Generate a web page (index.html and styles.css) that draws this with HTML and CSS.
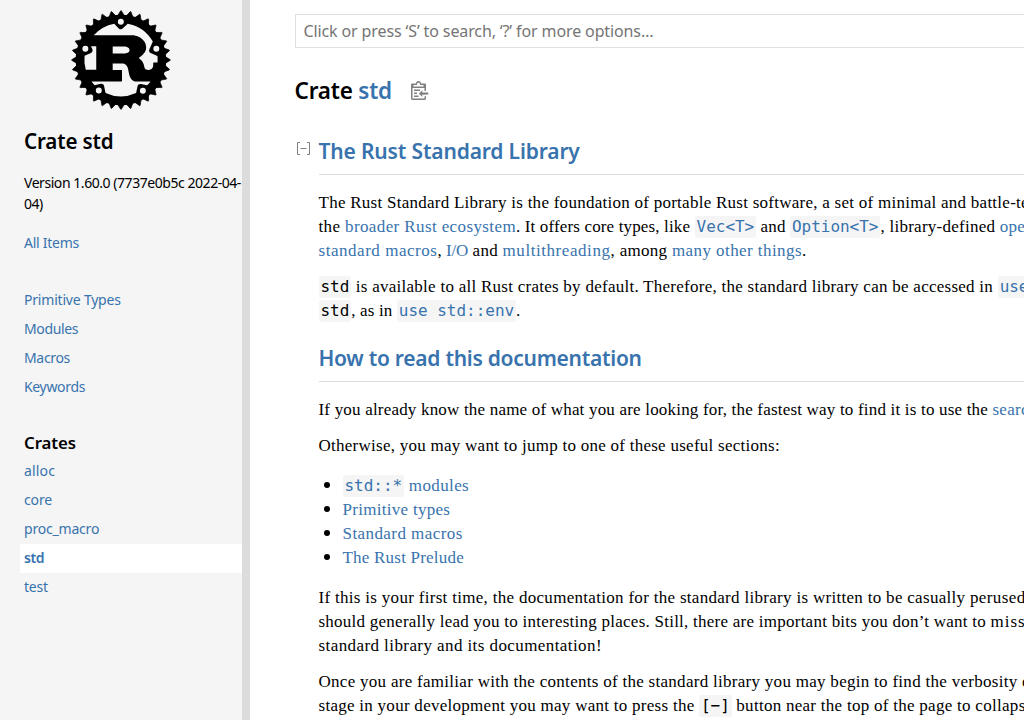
FILE: index.html
```html
<!DOCTYPE html>
<html lang="en">
<head>
<meta charset="utf-8">
<title>std - Rust</title>
<link rel="stylesheet" href="styles.css">
</head>
<body>
<nav class="sidebar">
<svg class="logo" width="100" height="100" viewBox="-52.25 -52.25 104.5 104.5">
<defs><g id="t1"><path d="M-3.600-46.2-.3-51.500H.3L3.600-46.2z" stroke="#000" stroke-width=".7" stroke-linejoin="round"/></g>
<g id="t4"><use href="#t1"/><use href="#t1" transform="rotate(11.25)"/><use href="#t1" transform="rotate(22.5)"/><use href="#t1" transform="rotate(33.75)"/></g>
<g id="t16"><use href="#t4"/><use href="#t4" transform="rotate(45)"/><use href="#t4" transform="rotate(90)"/><use href="#t4" transform="rotate(135)"/></g></defs>
<use href="#t16"/><use href="#t16" transform="rotate(180)"/>
<path transform="translate(-71.05 -70.95)" fill-rule="evenodd" d="m71.05 23.68c-26.06 0-47.27 21.22-47.27 47.27s21.22 47.27 47.27 47.27 47.27-21.22 47.27-47.27-21.22-47.27-47.27-47.27zm-.07 4.2a3.1 3.11 0 0 1 3.02 3.11 3.11 3.11 0 0 1-6.22 0 3.11 3.11 0 0 1 3.2-3.11zm7.12 5.12a38.27 38.27 0 0 1 26.2 18.66l-3.67 8.28c-.63 1.43.02 3.11 1.44 3.75l7.06 3.13a38.27 38.27 0 0 1 .08 6.64h-3.93c-.39 0-.55.26-.55.64v1.8c0 4.24-2.39 5.17-4.49 5.4-2 .23-4.21-.84-4.49-2.06-1.18-6.63-3.14-8.04-6.24-10.49 3.85-2.44 7.85-6.05 7.85-10.87 0-5.21-3.57-8.49-6-10.1-3.42-2.25-7.2-2.7-8.22-2.7h-40.6a38.27 38.27 0 0 1 21.41-12.08l4.79 5.02c1.08 1.13 2.87 1.18 4 .09zm-44.2 23.02a3.11 3.11 0 0 1 3.02 3.11 3.11 3.11 0 0 1-6.22 0 3.11 3.11 0 0 1 3.2-3.11zm74.15.14a3.11 3.11 0 0 1 3.02 3.11 3.11 3.11 0 0 1-6.22 0 3.11 3.11 0 0 1 3.2-3.11zm-68.29.5h5.42v24.44h-10.94a38.27 38.27 0 0 1-1.24-14.61l6.7-2.98c1.43-.64 2.08-2.31 1.44-3.74zm22.62.26h12.91c.67 0 4.71.77 4.71 3.8 0 2.51-3.1 3.41-5.65 3.41h-11.98zm0 17.56h9.89c.9 0 4.83.26 6.08 5.28.39 1.54 1.26 6.56 1.85 8.17.59 1.8 2.98 5.4 5.53 5.4h16.14a38.27 38.27 0 0 1-3.54 4.1l-6.57-1.41c-1.53-.33-3.04.65-3.37 2.18l-1.56 7.28a38.27 38.27 0 0 1-31.91-.15l-1.56-7.28c-.33-1.53-1.83-2.51-3.36-2.18l-6.43 1.38a38.27 38.27 0 0 1-3.32-3.92h31.27c.35 0 .59-.06.59-.39v-11.06c0-.32-.24-.39-.59-.39h-9.15zm-14.43 25.33a3.11 3.11 0 0 1 3.02 3.11 3.11 3.11 0 0 1-6.22 0 3.11 3.11 0 0 1 3.2-3.11zm46.05.14a3.11 3.11 0 0 1 3.02 3.11 3.11 3.11 0 0 1-6.22 0 3.11 3.11 0 0 1 3.2-3.11z"/>
</svg>
<h2 class="crate-name">Crate std</h2>
<p class="version">Version 1.60.0 (7737e0b5c 2022-04-<br>04)</p>
<a class="item all">All Items</a>
<div class="group">
<a class="item snug2">Primitive Types</a>
<a class="item snug4">Modules</a>
<a class="item snug3">Macros</a>
<a class="item snug3">Keywords</a>
</div>
<h3 class="crates">Crates</h3>
<a class="item open">alloc</a>
<a class="item snug1">core</a>
<a class="item snug2">proc_macro</a>
<a class="item current">std</a>
<a class="item snug2">test</a>
</nav>
<div class="gutter"></div>
<main>
<input class="search" placeholder="Click or press ‘S’ to search, ‘?’ for more options…">
<h1>Crate <a>std</a><svg class="copy" width="18" height="19" viewBox="0 0 24 25"><path d="M18 20h2v3c0 1-1 2-2 2H2c-.998 0-2-1-2-2V5c0-.911.755-1.667 1.667-1.667h5A3.323 3.323 0 0110 0a3.323 3.323 0 013.333 3.333h5C19.245 3.333 20 4.09 20 5v8.333h-2V9H2v14h16v-3zM3 7h14c0-.911-.793-1.667-1.75-1.667H13.5c-.957 0-1.75-.755-1.75-1.666C11.75 2.755 10.957 2 10 2s-1.75.755-1.75 1.667c0 .911-.793 1.666-1.75 1.666H4.75C3.793 5.333 3 6.09 3 7z"/><path d="M4 19h6v2H4zM12 11H4v2h8zM4 17h4v-2H4zM15 15v-3l-4.5 4.5L15 21v-3l8.027-.032L23 15z"/></svg></h1>
<div class="doc">
<svg class="toggle" width="17" height="17" viewBox="0 0 17 17"><path d="M5 2.5H2.5v12H5M12 2.5h2.5v12H12M5.500 8.500h6"/></svg>
<article>
<h2 class="title">The Rust Standard Library</h2>
<p><span class="w26">The Rust Standard Library is the foundation of portable Rust software, a set of minimal and </span><span class="w26">battle-tested shared</span><br><span class="w37">the </span><a class="w39">broader Rust ecosystem</a><span class="w14">. It offers core types, like </span><a><code>Vec&lt;T&gt;</code></a><span class="w14"> and </span><a><code>Option&lt;T&gt;</code></a><span class="w26">, library-defined </span><a class="w26">operations on</a><br><a class="w54">standard macros</a>, <a class="tight">I/O</a><span class="w29"> and </span><a class="w56">multithreading</a><span class="w29">, among </span><a class="w43">many other things</a>.</p>
<p><code>std</code><span class="w26"> is available to all Rust crates by default. Therefore, the standard library can be accessed in </span><a><code>use</code></a><br><code>std</code><span class="w14">, as in </span><a><code>use std::env</code></a>.</p>
<h2 class="title">How to read this documentation</h2>
<p><span class="w19">If you already know the name of what you are looking for, the fastest way to find it is to use the </span><a class="w26">search bar</a></p>
<p><span class="w26">Otherwise, you may want to jump to one of these useful sections:</span></p>
<ul>
<li><a class="w39"><code>std::*</code> modules</a></li>
<li><a class="w29">Primitive types</a></li>
<li><a class="w43">Standard macros</a></li>
<li><a class="w22">The Rust Prelude</a></li>
</ul>
<p><span class="w30">If this is your first time, the documentation for the standard library is written to be casually </span><span class="w39">perused.</span><br><span class="w25">should generally lead you to interesting places. Still, there are important bits you don’t want to </span><span class="w100">miss,</span><br><span class="w41">standard library and its documentation!</span></p>
<p><span class="w28">Once you are familiar with the contents of the standard library you may begin to find the verbosity </span><span class="w26">of</span><br><span class="w27">stage in your development you may want to press the </span><code>[−]</code><span class="w27"> button near the top of the page to </span><span class="w30">collapse</span></p>
</article>
</div>
</main>
</body>
</html>
```
FILE: styles.css
```css
* { box-sizing: border-box; }
body { margin: 0; height: 720px; overflow: hidden; display: flex; background: #fff; color: #000; font: 17px/24px "Liberation Serif", serif; }
h1, h2, h3, p, ul { margin: 0; }
h1, h2, h3, .sidebar, .search { font-family: "Noto Sans", sans-serif; font-weight: 600; }
a { color: #3873ad; }

.sidebar { flex: none; width: 242px; height: 720px; padding: 10px 0 0 20px; background: #f5f5f5; display: flex; flex-direction: column; }
.gutter { flex: none; width: 8px; background: #dcdcdc; }
.logo { flex: none; margin-left: 51px; }
.crate-name { padding-left: 4px; margin-top: 15px; font-size: 20.6px; line-height: 32px; letter-spacing: -.15px; }
.version { padding-left: 4px; margin-top: 15px; font-size: 14px; font-weight: 400; line-height: 21px; letter-spacing: -.45px; white-space: nowrap; }
.item { display: block; padding-left: 4px; font-size: 14px; font-weight: 400; line-height: 27px; height: 29px; }
.all { margin-top: 15px; letter-spacing: -.26px; }
.group { margin-top: 28px; }
.crates { padding: 0 0 2px 4px; margin-top: 28px; font-size: 16.8px; line-height: 25px; letter-spacing: -.06px; }
.current { background: #fff; font-weight: 600; letter-spacing: -.4px; }
.open { letter-spacing: .15px; }
.snug1 { letter-spacing: -.15px; }
.snug2 { letter-spacing: -.2px; }
.snug3 { letter-spacing: -.33px; }
.snug4 { letter-spacing: -.38px; }

main { flex: 1; min-width: 0; overflow: hidden; padding: 14px 0 0 44.500px; }
.search { display: block; width: 900px; height: 34px; padding: 0 8px; border: 1px solid #e0e0e0; background: #fff; font-size: 16px; font-weight: 400; letter-spacing: -.12px; }
.search::placeholder { color: #757575; opacity: 1; }
h1 { margin-top: 27px; display: flex; align-items: center; white-space: pre; font-size: 22.5px; line-height: 32px; letter-spacing: -.2px; }
.copy { margin: 0 0 2px 19px; fill: #808080; }
.doc { margin-top: 28px; display: grid; grid-template-columns: 24px 910px; }
.toggle { margin-top: 5px; fill: none; stroke: #808080; stroke-width: 1; }
.title { margin: 19px 0 16px; padding-bottom: 7px; border-bottom: 1px solid #ddd; color: #3873ad; font-size: 21px; line-height: 32px; letter-spacing: -.27px; }
.title:first-child { margin-top: 0; letter-spacing: -.15px; }
p { margin-bottom: 12px; white-space: pre; }
.version { margin-bottom: 0; }
ul { margin: 16px 0; padding-left: 24px; }
li::marker { font-size: 20px; line-height: 1; }
code { padding: 1px 2px 2px; border-radius: 3px; background: #f5f5f5; font: 16px/20px "DejaVu Sans Mono", monospace; letter-spacing: -.03px; }
.tight { letter-spacing: -.22px; }
.w14 { letter-spacing: .145px; }
.w19 { letter-spacing: .191px; }
.w22 { letter-spacing: .216px; }
.w25 { letter-spacing: .248px; }
.w26 { letter-spacing: .26px; }
.w27 { letter-spacing: .272px; }
.w28 { letter-spacing: .284px; }
.w29 { letter-spacing: .29px; }
.w30 { letter-spacing: .301px; }
.w37 { letter-spacing: .37px; }
.w39 { letter-spacing: .391px; }
.w41 { letter-spacing: .418px; }
.w43 { letter-spacing: .43px; }
.w54 { letter-spacing: .538px; }
.w56 { letter-spacing: .565px; }
.w100 { letter-spacing: 1px; }
```
